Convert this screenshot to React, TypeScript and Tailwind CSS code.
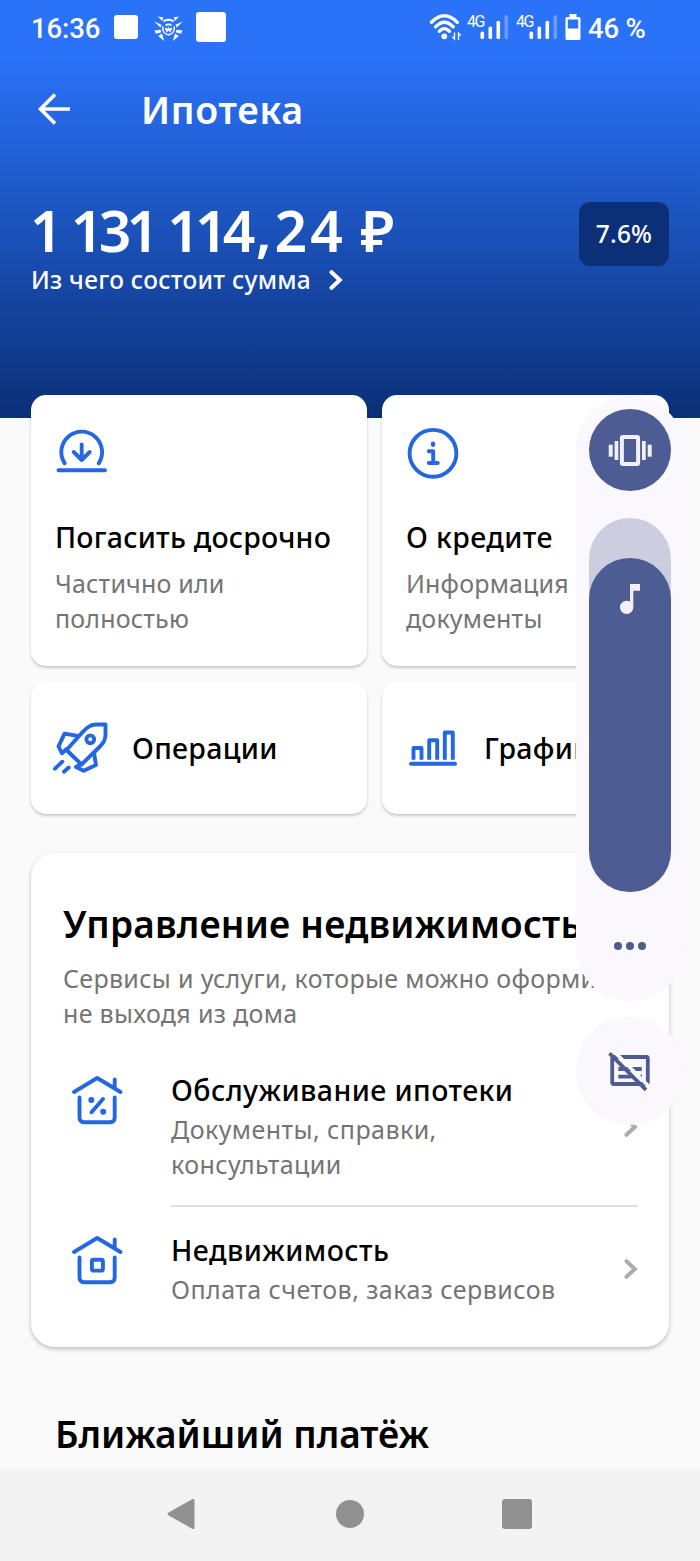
// App.tsx — Mortgage details screen with the system volume panel open
import type { ReactNode } from 'react';

/* ---------- Status bar icons ---------- */
function SpiderIcon() {
  return (
    <svg className="w-[31px] h-[27px]" viewBox="0 0 31 27" fill="white">
      <path d="M5 1.5l5.500 1-1.500 3.500zM26 1.500l-5.500 1 1.500 3.500zM1 6.500l7.500 3.200-1 2.800zM30 6.500l-7.500 3.200 1 2.800zM1.500 15.500l6-.8.8 2.600-5.300 1.500zM29.500 15.500l-6-.8-.8 2.600 5.300 1.500zM9 18.500l2.200 7.500-6-5zM22 18.500l-2.200 7.500 6-5z" />
      <path d="M9.800 11.500c-.8 4 1.500 7.500 5.700 8.500 4.200-1 6.500-4.500 5.700-8.500M12.500 10.500c1.500-1.600 4.500-1.600 6 0M12.500 13l1.500 3 1.500-2.500 1.500 2.500 1.500-3" fill="none" stroke="white" strokeWidth="1.700" />
      <path d="M10.500 6.500a6 4 0 0 1 10 0" fill="none" stroke="white" strokeWidth="2" />
    </svg>
  );
}

function WifiIcon() {
  return (
    <svg className="w-[34px] h-[30px]" viewBox="0 0 34 30" fill="none" stroke="white" strokeWidth="3.400" strokeLinecap="round">
      <path d="M3.500 10.200Q16.300 -2.600 29.200 10.200" />
      <path d="M7.600 14.800Q16.300 5.600 25.200 14.800" />
      <path d="M11.400 19.200Q16.300 14 21.400 19.200" />
      <circle cx="16.300" cy="24.300" r="2.900" fill="white" stroke="none" />
      <path d="M26.500 20.800v6.200l-1.800-2M30.500 27.500v-6.200l1.800 2" strokeWidth="1.300" />
    </svg>
  );
}

function SignalIcon() {
  return (
    <div className="relative w-[42px] h-[26px]">
      <span className="absolute left-0 top-0 font-['Roboto'] text-[16px] leading-[16px] tracking-[-1.500px]">4G</span>
      <svg className="absolute inset-0 w-full h-full" viewBox="0 0 42 26" fill="white">
        <rect x="13.500" y="17.500" width="3.600" height="7.500" rx="1.500" />
        <rect x="21.500" y="12.500" width="3.600" height="12.500" rx="1.500" />
        <rect x="29.500" y="6.800" width="3.600" height="18.200" rx="1.500" />
        <rect x="37.500" y="1" width="3.600" height="24" rx="1.500" opacity="0.3" />
      </svg>
    </div>
  );
}

function BatteryIcon() {
  return (
    <svg className="w-[16px] h-[26px]" viewBox="0 0 16 26">
      <path d="M4.500 0h7v3H14q1.500 0 1.500 1.500v20Q15.500 26 14 26H2Q.5 26 .5 24.500v-20Q.5 3 2 3h2.500zM2.800 5.500v9h10.400v-9z" fill="white" fillRule="evenodd" />
    </svg>
  );
}

/* ---------- Line icons ---------- */
function LineIcon({ className, viewBox, children }: { className: string; viewBox: string; children: ReactNode }) {
  return (
    <svg className={className} viewBox={viewBox} fill="none" stroke="#2467e3" strokeWidth="3.900" strokeLinecap="round" strokeLinejoin="round">
      {children}
    </svg>
  );
}

function RepayIcon() {
  return (
    <LineIcon className="w-14 h-14" viewBox="0 0 56 56">
      <path d="M9.700 37.300A20.400 20.400 0 1 1 43.700 37.300" />
      <path d="M3.500 44.300H50M26.700 18.500V33.500M18.700 26l8 8 8-8" />
    </LineIcon>
  );
}

function InfoIcon() {
  return (
    <LineIcon className="w-14 h-14" viewBox="1 0 56 56">
      <circle cx="28" cy="28.300" r="23.400" />
      <path d="M23.800 26.300H28.200V37.800M23.800 38H32.800" />
      <path d="M28 18.800v1" strokeWidth="4.400" />
    </LineIcon>
  );
}

function RocketIcon() {
  return (
    <LineIcon className="w-[60px] h-[60px]" viewBox="0 0 60 60">
      <path d="M55.500 6.500H46C39 6.500 34.500 12 30 17L16.500 32 31.500 46.500 49 29.500C53.500 25 55.500 22 55.500 16z" />
      <path d="M28 18L14.500 15.700 8.500 28.300 12 35.300 16.500 31M44 34.700L46 47 33.700 52.700 26 49 31.500 46" />
      <circle cx="40.300" cy="21.300" r="3.900" />
      <path d="M12.300 43.700L5 50.700M18.700 49.500L14 53.800" />
    </LineIcon>
  );
}

function ChartIcon() {
  return (
    <LineIcon className="w-14 h-12" viewBox="0 -1 56 48">
      <path d="M8.500 34.700V23h8v11.700M24.200 34.700V15.200h8v19.500M39.800 34.700V7.500h8v27.200" strokeLinecap="butt" />
      <path d="M6 38.700H50" />
    </LineIcon>
  );
}

function HouseIcon({ variant }: { variant: 'percent' | 'window' }) {
  return (
    <LineIcon className="w-14 h-14" viewBox="0 0 56 56">
      <path d="M5 20L28.200 6 51.500 20M45.700 7.500V16" />
      <path d="M10.500 25.500V45.500Q10.500 50.200 15 50.200H41.200Q45.700 50.200 45.700 45.500V25.500" />
      {variant === 'percent' ? (
        <>
          <path d="M22.500 40.200L34 27" />
          <circle cx="22.300" cy="28" r="3" fill="#2467e3" stroke="none" />
          <circle cx="34.200" cy="39.700" r="3" fill="#2467e3" stroke="none" />
        </>
      ) : (
        <rect x="22.900" y="27.800" width="11" height="10.800" rx="1.500" />
      )}
    </LineIcon>
  );
}

function Chevron({ className }: { className: string }) {
  return (
    <svg className={className} viewBox="0 0 14 20" fill="none" stroke="currentColor" strokeWidth="4" strokeLinecap="round" strokeLinejoin="miter">
      <path d="M2.500 2.200L10.800 10l-8.300 7.800" />
    </svg>
  );
}

/* ---------- Cards ---------- */
function ServiceRow({ icon, title, text }: { icon: ReactNode; title: string; text: ReactNode }) {
  return (
    <div className="flex">
      <div className="w-[102px] shrink-0 pl-[38px]">{icon}</div>
      <div className="ml-[38px] w-[430px]">
        <h3 className="text-[28.500px] leading-9 tracking-[0.420px] font-medium text-black whitespace-nowrap">{title}</h3>
        <p className="mt-1 text-[25px] leading-[35px] tracking-[0.440px] text-[#747474]">{text}</p>
      </div>
      <Chevron className="ml-[23px] -mt-px self-center w-[14px] h-5 text-[#acacac]" />
    </div>
  );
}

/* ---------- Volume panel ---------- */
function VolumePanel() {
  return (
    <div className="absolute left-[576px] top-[396px] w-[108px] flex flex-col gap-4">
      <div className="h-[605px] rounded-full bg-[#faf7fd] flex flex-col items-center pt-[13px]">
        <div className="w-[82px] h-[82px] rounded-full bg-[#4d5c92] flex items-center justify-center">
          <svg className="w-12 h-9" viewBox="0 0 48 36" fill="#f2eff7">
            <rect x="2.700" y="12.700" width="4" height="12" />
            <rect x="8.600" y="9" width="3.700" height="19" />
            <rect x="15.900" y="5" width="16.200" height="27" rx="1" fill="none" stroke="#f2eff7" strokeWidth="4" strokeLinejoin="round" />
            <rect x="36" y="9" width="3.700" height="19" />
            <rect x="41.700" y="12.700" width="4" height="12" />
          </svg>
        </div>
        <div className="mt-[27px] w-[82px] h-[374px] rounded-[41px] bg-[#cdcde0] pt-10">
          <div className="h-[334px] rounded-[41px] bg-[#4d5c92] flex justify-center pt-[21px]">
            <svg className="w-10 h-10" viewBox="0 0 24 24" fill="#f2eff7">
              <path d="M12 3v10.550c-.59-.34-1.270-.55-2-.55-2.210 0-4 1.790-4 4s1.790 4 4 4 4-1.790 4-4V7h4V3z" />
            </svg>
          </div>
        </div>
        <div className="mt-[50px] flex gap-1">
          <span className="w-2 h-2 rounded-full bg-[#4d5c92]" />
          <span className="w-2 h-2 rounded-full bg-[#4d5c92]" />
          <span className="w-2 h-2 rounded-full bg-[#4d5c92]" />
        </div>
      </div>
      <div className="w-[108px] h-[108px] rounded-full bg-[#faf7fd] flex items-center justify-center">
        <svg className="mt-1 w-12 h-12" viewBox="0 0 48 48" fill="none" stroke="#4d5c92" strokeWidth="3.800">
          <rect x="6.200" y="8" width="35.600" height="27" rx="1.500" />
          <path d="M12.300 20h13M26 20h9.700M12.300 27.700h13.400M34 27.700h2" />
          <path d="M5 -.5L47 41.500" stroke="#faf7fd" strokeWidth="3.600" />
          <path d="M3.500 4.300L40 40.800" />
        </svg>
      </div>
    </div>
  );
}

/* ---------- Main Screen ---------- */
export default function App() {
  return (
    <div className="relative w-[700px] h-[1561px] overflow-hidden bg-[#fafafa] font-['Noto_Sans',sans-serif] flex flex-col">
      <header className="h-[418px] shrink-0 bg-[linear-gradient(#2a72f8_55px,#0b2f77_418px)] text-white">
        {/* Status bar */}
        <div className="h-[54px] flex items-center pl-[31px] pr-[55px] font-['Roboto',sans-serif] font-medium text-[27.500px] leading-[54px]">
          <span className="w-[69px] pt-[3px] tracking-[-0.1px] whitespace-nowrap">16:36</span>
          <span className="ml-[14px] w-6 h-6 rounded-[3px] bg-white" />
          <span className="ml-[15px] pt-[3px]"><SpiderIcon /></span>
          <span className="ml-3 w-[30px] h-[30px] rounded-[3px] bg-white" />
          <div className="ml-auto flex items-center font-normal">
            <WifiIcon />
            <div className="ml-[5px]"><SignalIcon /></div>
            <div className="ml-[7px]"><SignalIcon /></div>
            <div className="ml-[7px]"><BatteryIcon /></div>
            <span className="ml-[7px] pt-[3px] w-[57px] font-medium tracking-[-0.2px] whitespace-nowrap">46 %</span>
          </div>
        </div>

        <div className="h-[110px] flex items-center pl-[38px]">
          <svg className="w-8 h-8" viewBox="0 0 32 32" fill="none" stroke="white" strokeWidth="3.600">
            <path d="M32 16H3M17 1.500L2.500 16 17 30.500" />
          </svg>
          <h1 className="ml-[71px] pt-[2px] text-[37.500px] leading-[46px] font-semibold tracking-[0.700px]">Ипотека</h1>
        </div>

        <div className="flex justify-between pl-[31px] pr-[31px] pt-[31px]">
          <div>
            <p className="h-[67px] text-[57px] leading-[70px] font-semibold whitespace-nowrap">
              <span className="-ml-px tracking-[-4.800px] [word-spacing:3px]">1 131 114</span>
              <span className="ml-[5px] tracking-[3px]">,24</span>
              <span> ₽</span>
            </p>
            <div className="flex items-center h-[35px]">
              <span className="text-[24.500px] leading-[35px] font-medium tracking-[0.270px] whitespace-nowrap">Из чего состоит сумма</span>
              <Chevron className="ml-[18px] w-[14px] h-5" />
            </div>
          </div>
          <div className="mt-[7px] w-[90px] h-16 rounded-[11px] bg-[#0b3077] flex items-center justify-center text-[24.500px] font-medium tracking-[0.2px]">7.6%</div>
        </div>
      </header>

      <main className="-mt-[23px] px-[31px]">
        <section className="grid grid-cols-[336px_287px] gap-x-[15px] gap-y-4">
          <div className="h-[271px] rounded-[15px] bg-white shadow-[0_2px_3px_rgba(0,0,0,0.2)] pl-6 pt-[31px]">
            <RepayIcon />
            <h2 className="mt-[37px] text-[28.500px] leading-9 font-medium tracking-[0.220px] text-black whitespace-nowrap">Погасить досрочно</h2>
            <p className="mt-[11px] text-[25px] leading-[35px] tracking-[0.180px] text-[#747474]">Частично или<br />полностью</p>
          </div>
          <div className="h-[271px] rounded-[15px] bg-white shadow-[0_2px_3px_rgba(0,0,0,0.2)] pl-6 pt-[30px] overflow-hidden">
            <InfoIcon />
            <h2 className="mt-[38px] text-[28.500px] leading-9 font-medium tracking-[0.4px] text-black whitespace-nowrap">О кредите</h2>
            <p className="mt-[11px] text-[25px] leading-[35px] tracking-[0.180px] text-[#747474]">Информация<br />документы</p>
          </div>
          <div className="h-[132px] rounded-[15px] bg-white shadow-[0_2px_3px_rgba(0,0,0,0.2)] pl-[19px] flex items-center">
            <RocketIcon />
            <h2 className="ml-[22px] text-[28.500px] leading-9 font-medium tracking-[0.3px] text-black">Операции</h2>
          </div>
          <div className="h-[132px] rounded-[15px] bg-white shadow-[0_2px_3px_rgba(0,0,0,0.2)] pl-[23px] flex items-center">
            <ChartIcon />
            <h2 className="ml-[23px] text-[28.500px] leading-9 font-medium tracking-[0.3px] text-black">График</h2>
          </div>
        </section>

        <section className="mt-[39px] h-[494px] rounded-[24px] bg-white shadow-[0_2px_4px_rgba(0,0,0,0.25)] pt-12 overflow-hidden">
          <h2 className="pl-8 text-[37px] leading-[46px] font-semibold tracking-[0.2px] text-black whitespace-nowrap">Управление недвижимостью</h2>
          <p className="mt-[14px] pl-8 text-[25px] leading-[35px] tracking-[0.320px] text-[#747474] whitespace-nowrap">
            Сервисы и услуги, которые можно оформить,<br />не выходя из дома
          </p>
          <div className="mt-[41px]">
            <ServiceRow icon={<HouseIcon variant="percent" />} title="Обслуживание ипотеки" text={<>Документы, справки,<br />консультации</>} />
          </div>
          <div className="mt-[23px] ml-[140px] mr-[31px] h-[2px] bg-[#dfdfdf]" />
          <div className="mt-[25px]">
            <ServiceRow icon={<HouseIcon variant="window" />} title="Недвижимость" text="Оплата счетов, заказ сервисов" />
          </div>
        </section>

        <h2 className="mt-16 pl-6 text-[37px] leading-[46px] font-semibold text-black">Ближайший платёж</h2>
      </main>

      {/* System navigation */}
      <nav className="mt-auto h-[93px] bg-[#f3f3f3] flex items-center pl-[167px] pb-px">
        <svg className="w-[28px] h-8" viewBox="0 0 29 32" fill="#919191">
          <path d="M26.500 .5Q28.500 0 28.500 2V30Q28.500 32 26.500 31.500L1.200 17.200Q-.2 16 1.200 14.800z" />
        </svg>
        <span className="ml-[141px] w-7 h-7 rounded-full bg-[#919191]" />
        <span className="ml-[138px] w-[30px] h-[30px] rounded-[3px] bg-[#919191]" />
      </nav>

      <VolumePanel />
    </div>
  );
}
